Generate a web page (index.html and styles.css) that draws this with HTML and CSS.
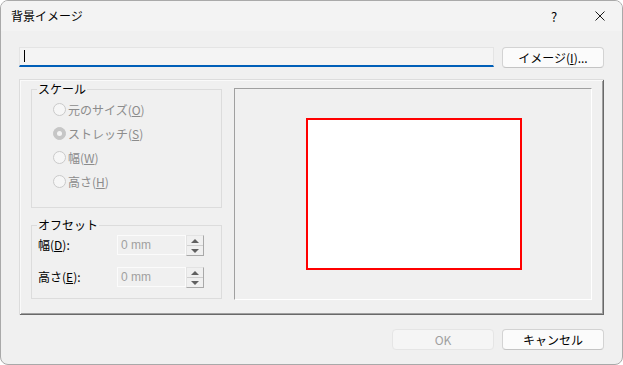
FILE: index.html
```html
<!DOCTYPE html>
<html lang="ja">

<head>
    <meta charset="UTF-8">
    <title>背景イメージ</title>
    <link rel="stylesheet" href="styles.css">
</head>

<body>
    <div class="window">
        <div class="titlebar">
            <span class="title">背景イメージ</span>
            <div class="caption-buttons">
                <span class="cap help">?</span>
                <span class="cap close">
                    <svg width="10" height="10" viewBox="0 0 10 10">
                        <path d="M0.5 0.5 L9.5 9.5 M9.5 0.5 L0.5 9.5" stroke="#1a1a1a" stroke-width="1" fill="none" />
                    </svg>
                </span>
            </div>
        </div>

        <div class="client">
            <!-- file path + browse -->
            <div class="file-row">
                <div class="path-input"><span class="caret"></span></div>
                <button class="btn">イメージ(<u>I</u>)...</button>
            </div>

            <div class="panel">
                <div class="side">
                    <fieldset class="group scale">
                        <legend>スケール</legend>
                        <label class="radio"><span class="dot"></span>元のサイズ(<u>O</u>)</label>
                        <label class="radio"><span class="dot checked"></span>ストレッチ(<u>S</u>)</label>
                        <label class="radio"><span class="dot"></span>幅(<u>W</u>)</label>
                        <label class="radio"><span class="dot"></span>高さ(<u>H</u>)</label>
                    </fieldset>

                    <fieldset class="group offset">
                        <legend>オフセット</legend>
                        <div class="field">
                            <span class="field-label">幅(<u>D</u>):</span>
                            <span class="spin-input">0 mm</span>
                            <span class="spin"><span class="up"></span><span class="down"></span></span>
                        </div>
                        <div class="field">
                            <span class="field-label">高さ(<u>E</u>):</span>
                            <span class="spin-input">0 mm</span>
                            <span class="spin"><span class="up"></span><span class="down"></span></span>
                        </div>
                    </fieldset>
                </div>

                <div class="preview">
                    <div class="page"></div>
                </div>
            </div>

            <div class="actions">
                <button class="btn" disabled>OK</button>
                <button class="btn">キャンセル</button>
            </div>
        </div>
    </div>
</body>

</html>
```

FILE: styles.css
```css
* {
    margin: 0;
    padding: 0;
    box-sizing: border-box;
}

body {
    background-color: #ffffff;
    font-family: "Noto Sans CJK JP", "Noto Sans", sans-serif;
    font-size: 12px;
    color: #000;
}

.window {
    width: 623px;
    height: 365px;
    border: 1px solid #a9a9a9;
    border-radius: 8px;
    overflow: hidden;
    background-color: #f0f0f0;
}

.titlebar {
    height: 30px;
    display: flex;
    align-items: center;
    justify-content: space-between;
    background-color: #f3f3f3;
}

.title {
    padding-left: 10px;
    line-height: 16px;
}

.caption-buttons {
    display: flex;
    height: 30px;
}

.cap {
    display: flex;
    align-items: center;
    justify-content: center;
    height: 30px;
}

.help {
    width: 46px;
    font-size: 13px;
}

.close {
    width: 45px;
}

.client {
    padding: 16px 18px 0 18px;
}

.file-row {
    display: flex;
    gap: 8px;
}

.path-input {
    flex: 1;
    height: 20px;
    background-color: #f4f4f4;
    border: 1px solid #e4e4e4;
    border-bottom: 2px solid #005fb8;
    padding: 2px 0 0 4px;
}

.caret {
    display: block;
    width: 1px;
    height: 12px;
    background-color: #000;
}

.btn {
    width: 102px;
    height: 21px;
    font-family: inherit;
    font-size: 12px;
    line-height: 19px;
    color: #000;
    background-color: #fbfbfb;
    border: 1px solid #d3d3d3;
    border-bottom-color: #c4c4c4;
    border-radius: 4px;
}

.btn:disabled {
    color: #a0a0a0;
    background-color: #f5f5f5;
    border-color: #e5e5e5;
}

.panel {
    margin-top: 11px;
    height: 236px;
    display: flex;
    align-items: flex-start;
    gap: 12px;
    padding: 3px 0 0 12px;
    box-shadow: inset 1px 1px 0 #dcdcdc, inset -1px -1px 0 #696969, inset 2px 2px 0 #fafafa, inset -2px -2px 0 #a0a0a0;
}

.side {
    width: 191px;
    display: flex;
    flex-direction: column;
    gap: 10px;
}

.group {
    border: 1px solid #dcdcdc;
}

.group legend {
    margin-left: 5px;
    padding: 0 1px;
    line-height: 14px;
}

.scale {
    height: 126px;
    padding-top: 1px;
}

.radio {
    display: flex;
    align-items: center;
    height: 24px;
    margin-left: 21px;
    color: #8c8c8c;
}

.dot {
    width: 13px;
    height: 13px;
    margin-right: 2px;
    border: 1px solid #cacaca;
    border-radius: 50%;
    background-color: #f6f6f6;
    display: flex;
    align-items: center;
    justify-content: center;
}

.dot.checked {
    background-color: #c6c6c6;
    border-color: #c6c6c6;
}

.dot.checked::after {
    content: "";
    width: 5px;
    height: 5px;
    border-radius: 50%;
    background-color: #f4f4f4;
}

.offset {
    height: 81px;
    padding-top: 3px;
    display: flex;
    flex-direction: column;
    gap: 11px;
}

.field {
    display: flex;
    align-items: flex-start;
    height: 21px;
    margin-left: 6px;
}

.field-label {
    width: 79px;
    line-height: 20px;
}

.spin-input {
    width: 69px;
    height: 20px;
    border: 1px solid #fbfbfb;
    padding-left: 3px;
    line-height: 18px;
    color: #a0a0a0;
    font-family: "Liberation Sans", sans-serif;
}

.spin {
    width: 18px;
    height: 21px;
    display: flex;
    flex-direction: column;
    border: 1px solid #a9a9a9;
    border-top-color: #e3e3e3;
    border-left-color: #e3e3e3;
}

.spin span {
    flex: 1;
    display: flex;
    align-items: center;
    justify-content: center;
}

.spin .up {
    border-bottom: 1px solid #cfcfcf;
}

.spin .up::after,
.spin .down::after {
    content: "";
    border-left: 4px solid transparent;
    border-right: 4px solid transparent;
}

.spin .up::after {
    border-bottom: 4px solid #606060;
}

.spin .down::after {
    border-top: 4px solid #606060;
}

.preview {
    width: 358px;
    height: 212px;
    margin-top: 6px;
    display: flex;
    align-items: center;
    justify-content: center;
    padding-left: 2px;
    border: 1px solid #ffffff;
    border-top-color: #a0a0a0;
    border-left-color: #a0a0a0;
}

.page {
    width: 216px;
    height: 152px;
    background-color: #ffffff;
    border: 2px solid #ff0000;
}

.actions {
    margin-top: 14px;
    display: flex;
    justify-content: flex-end;
    gap: 8px;
}
```
